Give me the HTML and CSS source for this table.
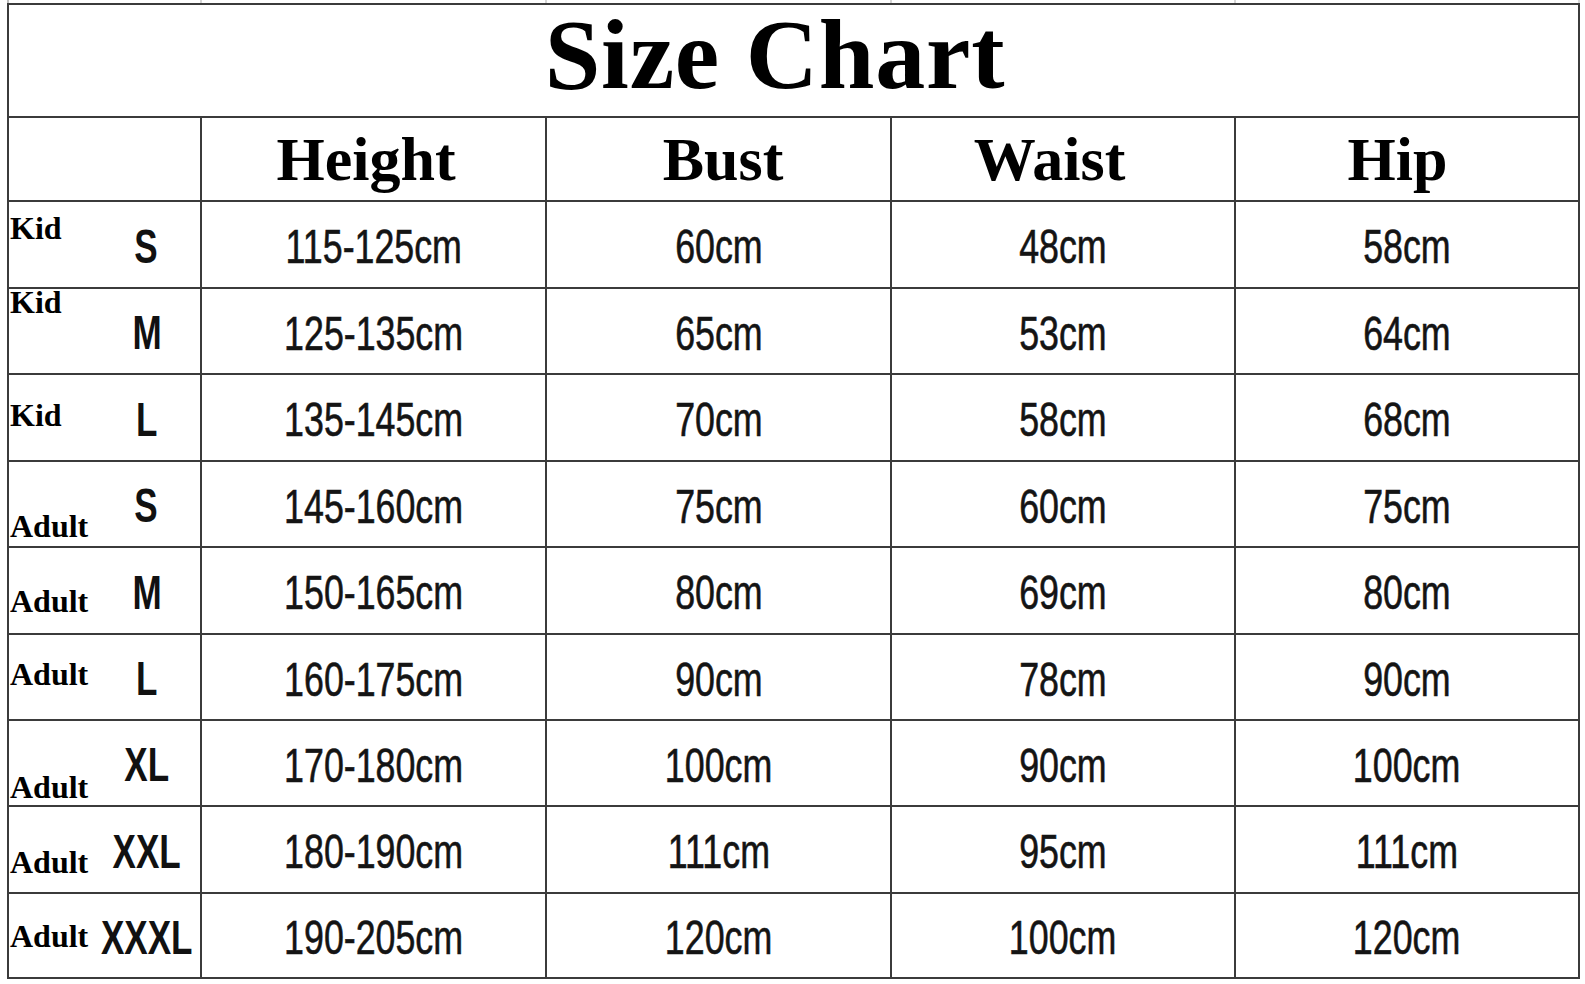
FILE: index.html
```html
<!DOCTYPE html>
<html lang="en">
<head>
<meta charset="utf-8">
<title>Size Chart</title>
<link rel="stylesheet" href="styles.css">
</head>
<body>
<div class="sheet">
  <div class="ghost"><span></span><span></span><span></span><span></span><span></span></div>
  <div class="chart">
    <div class="title">Size Chart</div>

    <div class="cell head"></div>
    <div class="cell head h-height"><span>Height</span></div>
    <div class="cell head h-bust"><span>Bust</span></div>
    <div class="cell head h-waist"><span>Waist</span></div>
    <div class="cell head h-hip"><span>Hip</span></div>

    <div class="cell size r1"><span class="group">Kid</span><span class="code"><span>S</span></span></div>
    <div class="cell val"><span>115-125cm</span></div>
    <div class="cell val"><span>60cm</span></div>
    <div class="cell val"><span>48cm</span></div>
    <div class="cell val"><span>58cm</span></div>

    <div class="cell size r2"><span class="group">Kid</span><span class="code"><span>M</span></span></div>
    <div class="cell val"><span>125-135cm</span></div>
    <div class="cell val"><span>65cm</span></div>
    <div class="cell val"><span>53cm</span></div>
    <div class="cell val"><span>64cm</span></div>

    <div class="cell size r3"><span class="group">Kid</span><span class="code"><span>L</span></span></div>
    <div class="cell val"><span>135-145cm</span></div>
    <div class="cell val"><span>70cm</span></div>
    <div class="cell val"><span>58cm</span></div>
    <div class="cell val"><span>68cm</span></div>

    <div class="cell size r4"><span class="group">Adult</span><span class="code"><span>S</span></span></div>
    <div class="cell val"><span>145-160cm</span></div>
    <div class="cell val"><span>75cm</span></div>
    <div class="cell val"><span>60cm</span></div>
    <div class="cell val"><span>75cm</span></div>

    <div class="cell size r5"><span class="group">Adult</span><span class="code"><span>M</span></span></div>
    <div class="cell val"><span>150-165cm</span></div>
    <div class="cell val"><span>80cm</span></div>
    <div class="cell val"><span>69cm</span></div>
    <div class="cell val"><span>80cm</span></div>

    <div class="cell size r6"><span class="group">Adult</span><span class="code"><span>L</span></span></div>
    <div class="cell val"><span>160-175cm</span></div>
    <div class="cell val"><span>90cm</span></div>
    <div class="cell val"><span>78cm</span></div>
    <div class="cell val"><span>90cm</span></div>

    <div class="cell size r7"><span class="group">Adult</span><span class="code"><span>XL</span></span></div>
    <div class="cell val"><span>170-180cm</span></div>
    <div class="cell val"><span>100cm</span></div>
    <div class="cell val"><span>90cm</span></div>
    <div class="cell val"><span>100cm</span></div>

    <div class="cell size r8"><span class="group">Adult</span><span class="code"><span>XXL</span></span></div>
    <div class="cell val"><span>180-190cm</span></div>
    <div class="cell val"><span>111cm</span></div>
    <div class="cell val"><span>95cm</span></div>
    <div class="cell val"><span>111cm</span></div>

    <div class="cell size r9"><span class="group">Adult</span><span class="code"><span>XXXL</span></span></div>
    <div class="cell val"><span>190-205cm</span></div>
    <div class="cell val"><span>120cm</span></div>
    <div class="cell val"><span>100cm</span></div>
    <div class="cell val"><span>120cm</span></div>
  </div>
</div>
</body>
</html>
```

FILE: styles.css
```css
html, body {
  margin: 0;
  background: #ffffff;
}

.sheet {
  padding-left: 7px;
  width: 1573px;
}

.ghost {
  display: grid;
  grid-template-columns: 193px 345px 345px 344px 344px;
  height: 3px;
  padding-left: 2px;
}

.ghost span {
  border-right: 2px solid #d6d6d6;
}

.ghost span:first-child {
  box-shadow: -2px 0 0 #bdbdbd;
}

.chart {
  display: grid;
  grid-template-columns: 193px 345px 345px 344px 344px;
  grid-template-rows: 113px 84px 87px 86px 87px 86px 87px 86px 86px 87px 85px;
  width: 1573px;
  box-sizing: border-box;
  border-left: 2px solid #3b3b3b;
  border-top: 2px solid #3b3b3b;
  color: #000;
}

.cell,
.title {
  box-sizing: border-box;
  border-right: 2px solid #3b3b3b;
  border-bottom: 2px solid #3b3b3b;
  display: flex;
  align-items: center;
  justify-content: center;
  min-width: 0;
}

.title {
  grid-column: 1 / -1;
  align-items: flex-start;
  padding-right: 37px;
  font-family: "Liberation Serif", "Times New Roman", serif;
  font-weight: bold;
  font-size: 100px;
  line-height: 100px;
  letter-spacing: 0.8px;
  white-space: nowrap;
}

.head span {
  font-family: "Liberation Serif", "Times New Roman", serif;
  font-weight: bold;
  font-size: 62px;
  line-height: 62px;
  white-space: nowrap;
}

.h-height { padding-right: 15px; }
.h-bust { padding-left: 9px; }
.h-waist { padding-right: 27px; }
.h-hip { padding-right: 19px; }

.val {
  padding-top: 4px;
}

.val span {
  display: inline-block;
  font-family: "Liberation Sans", Arial, sans-serif;
  font-size: 49px;
  line-height: 1;
  color: #141414;
  -webkit-text-stroke: 0.6px #141414;
  transform: scaleX(0.73);
  white-space: nowrap;
}

.size {
  display: grid;
  grid-template-columns: 83px minmax(0, 1fr);
  align-items: start;
  justify-content: stretch;
  padding-left: 1px;
}

.group {
  font-family: "Liberation Serif", "Times New Roman", serif;
  font-weight: bold;
  font-size: 32px;
  line-height: 32px;
  white-space: nowrap;
}

.code {
  align-self: stretch;
  min-width: 0;
  display: flex;
  align-items: center;
  justify-content: center;
  padding-top: 4px;
}

.code span {
  display: inline-block;
  flex: none;
  font-family: "Liberation Sans", Arial, sans-serif;
  font-weight: bold;
  font-size: 48px;
  line-height: 1;
  color: #111;
  transform: scaleX(0.73);
  white-space: nowrap;
}

.r1 .group { margin-top: 10px; }
.r2 .group { margin-top: -3px; }
.r3 .group { margin-top: 24px; }
.r4 .group { margin-top: 48px; }
.r5 .group { margin-top: 37px; }
.r6 .group { margin-top: 23px; }
.r7 .group { margin-top: 50px; }
.r8 .group { margin-top: 39px; }
.r9 .group { margin-top: 26px; }
```
